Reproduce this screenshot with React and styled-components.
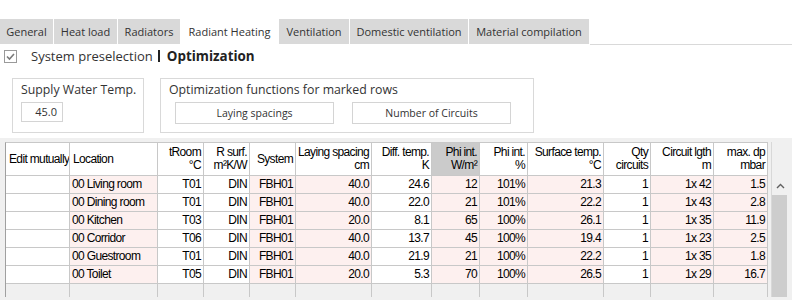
import React from "react";
import styled, { createGlobalStyle } from "styled-components";

const Global = createGlobalStyle`
  html, body { margin: 0; padding: 0; background: #ffffff; }
  body { font-family: "Open Sans", "Noto Sans", sans-serif; color: #1a1a1a; }
  * { box-sizing: border-box; }
`;

const Page = styled.div`
  width: 792px;
  height: 300px;
  overflow: hidden;
  display: flex;
  flex-direction: column;
  background: #ffffff;
`;

const TabStrip = styled.div`
  margin-top: 19px;
  display: flex;
  align-items: flex-start;
  gap: 1px;
`;

const Tab = styled.div`
  width: ${(p) => p.$w}px;
  height: 25px;
  display: flex;
  align-items: center;
  justify-content: center;
  font-size: 11px;
  color: #333;
  white-space: nowrap;
  background: ${(p) => (p.$active ? "#ffffff" : "#d9d9d9")};
`;

const TabFiller = styled.div`
  flex: 1;
  height: 26px;
  border-bottom: 1px solid #d9d9d9;
`;

const ModeRow = styled.div`
  display: flex;
  align-items: center;
  height: 24px;
  margin-top: -1px;
  padding-left: 4px;
`;

const Check = styled.span`
  width: 13px;
  height: 13px;
  border: 1px solid #9a9a9a;
  background: #fff;
  display: inline-flex;
  align-items: center;
  justify-content: center;
  margin-right: 14px;
`;

const ModeLabel = styled.span`
  font-size: 13px;
  color: #333;
  white-space: nowrap;
`;

const Divider = styled.span`
  width: 2px;
  height: 12px;
  background: #222;
  margin: 0 7px 0 5px;
`;

const ModeTitle = styled.span`
  font-size: 13.4px;
  font-weight: 700;
  color: #222;
`;

const Groups = styled.div`
  display: flex;
  gap: 16px;
  margin-top: 10px;
  padding-left: 12px;
`;

const GroupBox = styled.div`
  width: ${(p) => p.$w}px;
  height: 55px;
  border: 1px solid #d9d9d9;
  padding: 1px 8px 0 8px;
  display: flex;
  flex-direction: column;
`;

const GroupTitle = styled.div`
  font-size: 12.3px;
  color: #333;
  height: 22px;
  line-height: 20px;
  white-space: nowrap;
`;

const ValueBox = styled.div`
  width: 42px;
  height: 20px;
  border: 1px solid #d4d4d4;
  font-size: 11px;
  color: #333;
  text-align: right;
  padding-right: 5px;
  line-height: 18px;
`;

const ButtonRow = styled.div`
  display: flex;
  gap: 18px;
  padding-left: 6px;
`;

const ActionButton = styled.div`
  width: 159px;
  height: 22px;
  border: 1px solid #d4d4d4;
  background: #fff;
  font-size: 10.5px;
  color: #333;
  display: flex;
  align-items: center;
  justify-content: center;
`;

const GridArea = styled.div`
  margin-top: 5px;
  flex: 1;
  background: #f0f0f0;
  display: flex;
  align-items: flex-start;
  padding: 4px 0 0 5px;
`;

const Grid = styled.div`
  display: grid;
  grid-template-columns: ${(p) => p.$cols};
  border-top: 1px solid #c8c8c8;
  border-left: 1px solid #a0a0a0;
  font-family: "Liberation Sans", Arial, sans-serif;
  font-size: 12px;
  letter-spacing: -0.65px;
  color: #000;
`;

const HeadCell = styled.div`
  height: 33px;
  border-right: 1px solid #c8c8c8;
  border-bottom: 1px solid #c8c8c8;
  background: ${(p) => (p.$sorted ? "#cbcbcb" : "#ffffff")};
  display: flex;
  flex-direction: column;
  justify-content: ${(p) => (p.$single ? "center" : "flex-start")};
  align-items: ${(p) => (p.$align === "left" ? "flex-start" : "flex-end")};
  padding: ${(p) => (p.$single ? "0 2px 0 3px" : "3px 2px 0 2px")};
  line-height: 13px;
  white-space: nowrap;
  overflow: hidden;
`;

const Cell = styled.div`
  height: 18px;
  border-right: 1px solid #c8c8c8;
  border-bottom: 1px solid #c8c8c8;
  background: ${(p) => (p.$pink ? "#fdf0ef" : "#ffffff")};
  text-align: ${(p) => p.$align};
  padding: 0 2px 0 2px;
  line-height: 17px;
  white-space: nowrap;
  overflow: hidden;
`;

const EmptyCell = styled.div`
  height: 13px;
  border-right: 1px solid #c8c8c8;
  background: #f0f0f0;
`;

const ScrollBar = styled.div`
  margin-left: 3px;
  width: 17px;
  height: 155px;
  display: flex;
  flex-direction: column;
  border-left: 1px solid #d8d8d8;
`;

const ScrollHead = styled.div`
  height: 34px;
  background: #f0f0f0;
`;

const ScrollArrow = styled.div`
  height: 19px;
  background: #f0f0f0;
  display: flex;
  align-items: center;
  justify-content: center;
`;

const ScrollThumb = styled.div`
  flex: 1;
  margin: 0 1px 0 0;
  background: #cdcdcd;
`;

const columns = [
  { h: ["Edit mutually"], w: 64, align: "left", pink: false },
  { h: ["Location"], w: 88, align: "left", pink: true },
  { h: ["tRoom", "°C"], w: 46, align: "right", pink: false },
  { h: ["R surf.", "m²K/W"], w: 46, align: "right", pink: false },
  { h: ["System"], w: 46, align: "right", pink: true, single: true },
  { h: ["Laying spacing", "cm"], w: 76, align: "right", pink: true },
  { h: ["Diff. temp.", "K"], w: 60, align: "right", pink: false },
  { h: ["Phi int.", "W/m²"], w: 48, align: "right", pink: true, sorted: true },
  { h: ["Phi int.", "%"], w: 48, align: "right", pink: true },
  { h: ["Surface temp.", "°C"], w: 76, align: "right", pink: true },
  { h: ["Qty", "circuits"], w: 47, align: "right", pink: false },
  { h: ["Circuit lgth", "m"], w: 63, align: "right", pink: true },
  { h: ["max. dp", "mbar"], w: 54, align: "right", pink: true },
];

const rows = [
  ["", "00 Living room", "T01", "DIN", "FBH01", "40.0", "24.6", "12", "101%", "21.3", "1", "1x 42", "1.5"],
  ["", "00 Dining room", "T01", "DIN", "FBH01", "40.0", "22.0", "21", "101%", "22.2", "1", "1x 43", "2.8"],
  ["", "00 Kitchen", "T03", "DIN", "FBH01", "20.0", "8.1", "65", "100%", "26.1", "1", "1x 35", "11.9"],
  ["", "00 Corridor", "T06", "DIN", "FBH01", "40.0", "13.7", "45", "100%", "19.4", "1", "1x 23", "2.5"],
  ["", "00 Guestroom", "T01", "DIN", "FBH01", "40.0", "21.9", "21", "100%", "22.2", "1", "1x 35", "1.8"],
  ["", "00 Toilet", "T05", "DIN", "FBH01", "20.0", "5.3", "70", "100%", "26.5", "1", "1x 29", "16.7"],
];

const tabs = [
  { label: "General", w: 53 },
  { label: "Heat load", w: 63 },
  { label: "Radiators", w: 62 },
  { label: "Radiant Heating", w: 97, active: true },
  { label: "Ventilation", w: 70 },
  { label: "Domestic ventilation", w: 118 },
  { label: "Material compilation", w: 120 },
];

export default function App() {
  return (
    <Page>
      <Global />
      <TabStrip>
        {tabs.map((t) => (
          <Tab key={t.label} $w={t.w} $active={t.active}>
            {t.label}
          </Tab>
        ))}
        <TabFiller />
      </TabStrip>

      <ModeRow>
        <Check>
          <svg width="11" height="11" viewBox="0 0 11 11">
            <path d="M2 5.5 L4.5 8 L9 3" fill="none" stroke="#7a7a7a" strokeWidth="1.6" />
          </svg>
        </Check>
        <ModeLabel>System preselection</ModeLabel>
        <Divider />
        <ModeTitle>Optimization</ModeTitle>
      </ModeRow>

      <Groups>
        <GroupBox $w={132}>
          <GroupTitle>Supply Water Temp.</GroupTitle>
          <ValueBox>45.0</ValueBox>
        </GroupBox>
        <GroupBox $w={374}>
          <GroupTitle>Optimization functions for marked rows</GroupTitle>
          <ButtonRow>
            <ActionButton>Laying spacings</ActionButton>
            <ActionButton>Number of Circuits</ActionButton>
          </ButtonRow>
        </GroupBox>
      </Groups>

      <GridArea>
        <Grid $cols={columns.map((c) => `${c.w}px`).join(" ")}>
          {columns.map((c, i) => (
            <HeadCell
              key={"h" + i}
              $align={c.h.length === 1 && !c.single ? "left" : "right"}
              $single={c.h.length === 1}
              $sorted={c.sorted}
            >
              {c.h.map((line) => (
                <span key={line}>{line}</span>
              ))}
            </HeadCell>
          ))}
          {rows.map((r, ri) =>
            r.map((v, ci) => (
              <Cell key={ri + "-" + ci} $align={columns[ci].align} $pink={columns[ci].pink}>
                {v}
              </Cell>
            ))
          )}
          {columns.map((c, i) => (
            <EmptyCell key={"e" + i} />
          ))}
        </Grid>
        <ScrollBar>
          <ScrollHead />
          <ScrollArrow>
            <svg width="9" height="6" viewBox="0 0 9 6">
              <path d="M1 5 L4.5 1.5 L8 5" fill="none" stroke="#606060" strokeWidth="1.4" />
            </svg>
          </ScrollArrow>
          <ScrollThumb />
        </ScrollBar>
      </GridArea>
    </Page>
  );
}
